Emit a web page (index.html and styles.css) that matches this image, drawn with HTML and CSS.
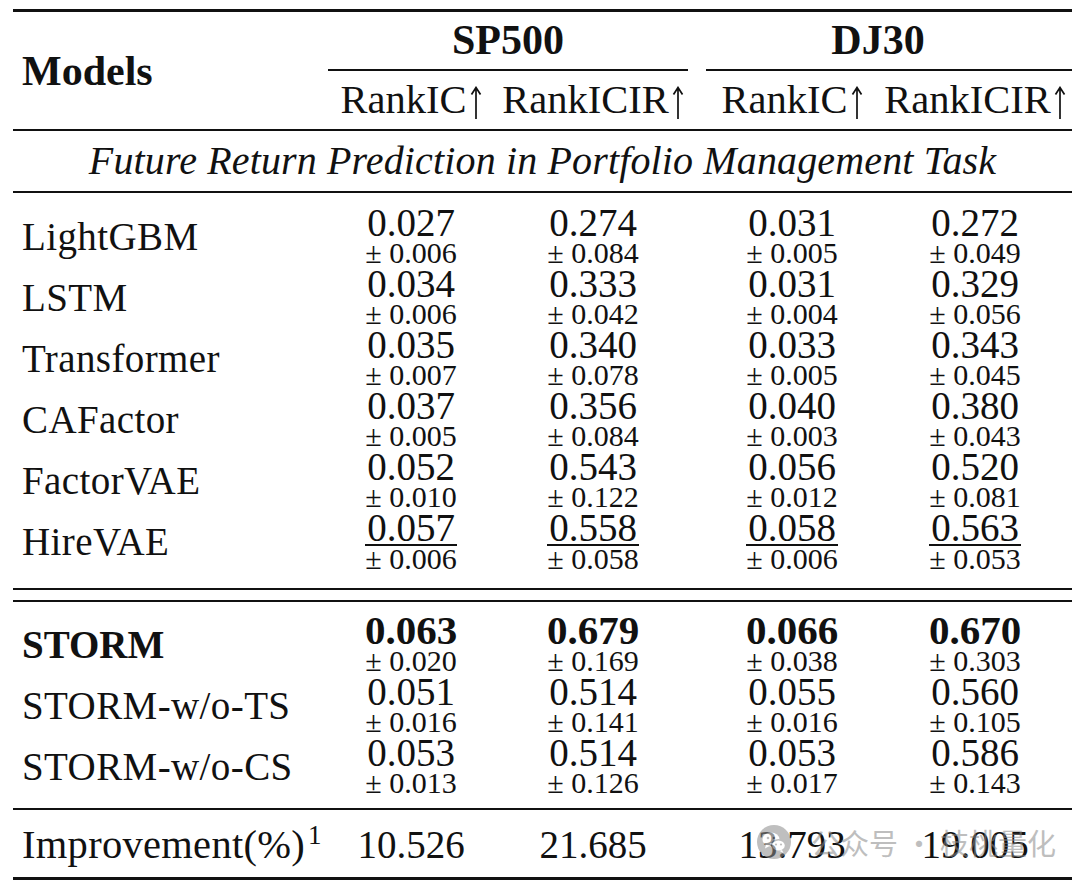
FILE: index.html
```html
<!DOCTYPE html>
<html lang="en">
<head>
<meta charset="utf-8">
<title>Results table</title>
<link rel="stylesheet" href="styles.css">
</head>
<body>
<div class="page">
  <div class="tbl">
    <div class="head">
      <div class="models">Models</div>
      <div class="grp sp"><span>SP500</span></div>
      <div class="grp dj"><span>DJ30</span></div>
      <div class="sub s1">RankIC<svg class="arr" viewBox="0 0 12 33" aria-hidden="true"><path d="M6 1.5 V33 M1.5 8.5 L6 1.5 L10.5 8.5"/></svg></div>
      <div class="sub s2">RankICIR<svg class="arr" viewBox="0 0 12 33" aria-hidden="true"><path d="M6 1.5 V33 M1.5 8.5 L6 1.5 L10.5 8.5"/></svg></div>
      <div class="sub s3">RankIC<svg class="arr" viewBox="0 0 12 33" aria-hidden="true"><path d="M6 1.5 V33 M1.5 8.5 L6 1.5 L10.5 8.5"/></svg></div>
      <div class="sub s4">RankICIR<svg class="arr" viewBox="0 0 12 33" aria-hidden="true"><path d="M6 1.5 V33 M1.5 8.5 L6 1.5 L10.5 8.5"/></svg></div>
    </div>
    <div class="task">Future Return Prediction in Portfolio Management Task</div>

    <div class="group g1">
      <div class="row">
        <div class="name">LightGBM</div>
        <div class="cell"><div class="st"><div class="mn">0.027</div><div class="sd">± 0.006</div></div></div>
        <div class="cell"><div class="st"><div class="mn">0.274</div><div class="sd">± 0.084</div></div></div>
        <div class="cell c3"><div class="st"><div class="mn">0.031</div><div class="sd">± 0.005</div></div></div>
        <div class="cell"><div class="st"><div class="mn">0.272</div><div class="sd">± 0.049</div></div></div>
      </div>
      <div class="row">
        <div class="name">LSTM</div>
        <div class="cell"><div class="st"><div class="mn">0.034</div><div class="sd">± 0.006</div></div></div>
        <div class="cell"><div class="st"><div class="mn">0.333</div><div class="sd">± 0.042</div></div></div>
        <div class="cell c3"><div class="st"><div class="mn">0.031</div><div class="sd">± 0.004</div></div></div>
        <div class="cell"><div class="st"><div class="mn">0.329</div><div class="sd">± 0.056</div></div></div>
      </div>
      <div class="row">
        <div class="name">Transformer</div>
        <div class="cell"><div class="st"><div class="mn">0.035</div><div class="sd">± 0.007</div></div></div>
        <div class="cell"><div class="st"><div class="mn">0.340</div><div class="sd">± 0.078</div></div></div>
        <div class="cell c3"><div class="st"><div class="mn">0.033</div><div class="sd">± 0.005</div></div></div>
        <div class="cell"><div class="st"><div class="mn">0.343</div><div class="sd">± 0.045</div></div></div>
      </div>
      <div class="row">
        <div class="name">CAFactor</div>
        <div class="cell"><div class="st"><div class="mn">0.037</div><div class="sd">± 0.005</div></div></div>
        <div class="cell"><div class="st"><div class="mn">0.356</div><div class="sd">± 0.084</div></div></div>
        <div class="cell c3"><div class="st"><div class="mn">0.040</div><div class="sd">± 0.003</div></div></div>
        <div class="cell"><div class="st"><div class="mn">0.380</div><div class="sd">± 0.043</div></div></div>
      </div>
      <div class="row">
        <div class="name">FactorVAE</div>
        <div class="cell"><div class="st"><div class="mn">0.052</div><div class="sd">± 0.010</div></div></div>
        <div class="cell"><div class="st"><div class="mn">0.543</div><div class="sd">± 0.122</div></div></div>
        <div class="cell c3"><div class="st"><div class="mn">0.056</div><div class="sd">± 0.012</div></div></div>
        <div class="cell"><div class="st"><div class="mn">0.520</div><div class="sd">± 0.081</div></div></div>
      </div>
      <div class="row">
        <div class="name">HireVAE</div>
        <div class="cell"><div class="st ul"><div class="mn">0.057</div><div class="sd">± 0.006</div></div></div>
        <div class="cell"><div class="st ul"><div class="mn">0.558</div><div class="sd">± 0.058</div></div></div>
        <div class="cell c3"><div class="st ul"><div class="mn">0.058</div><div class="sd">± 0.006</div></div></div>
        <div class="cell"><div class="st ul"><div class="mn">0.563</div><div class="sd">± 0.053</div></div></div>
      </div>
    </div>

    <div class="group g2">
      <div class="row b">
        <div class="name">STORM</div>
        <div class="cell"><div class="st"><div class="mn">0.063</div><div class="sd">± 0.020</div></div></div>
        <div class="cell"><div class="st"><div class="mn">0.679</div><div class="sd">± 0.169</div></div></div>
        <div class="cell c3"><div class="st"><div class="mn">0.066</div><div class="sd">± 0.038</div></div></div>
        <div class="cell"><div class="st"><div class="mn">0.670</div><div class="sd">± 0.303</div></div></div>
      </div>
      <div class="row">
        <div class="name">STORM-w/o-TS</div>
        <div class="cell"><div class="st"><div class="mn">0.051</div><div class="sd">± 0.016</div></div></div>
        <div class="cell"><div class="st"><div class="mn">0.514</div><div class="sd">± 0.141</div></div></div>
        <div class="cell c3"><div class="st"><div class="mn">0.055</div><div class="sd">± 0.016</div></div></div>
        <div class="cell"><div class="st"><div class="mn">0.560</div><div class="sd">± 0.105</div></div></div>
      </div>
      <div class="row">
        <div class="name">STORM-w/o-CS</div>
        <div class="cell"><div class="st"><div class="mn">0.053</div><div class="sd">± 0.013</div></div></div>
        <div class="cell"><div class="st"><div class="mn">0.514</div><div class="sd">± 0.126</div></div></div>
        <div class="cell c3"><div class="st"><div class="mn">0.053</div><div class="sd">± 0.017</div></div></div>
        <div class="cell"><div class="st"><div class="mn">0.586</div><div class="sd">± 0.143</div></div></div>
      </div>
    </div>

    <div class="row imp">
      <div class="name">Improvement(%)<sup>1</sup></div>
      <div class="cell v">10.526</div>
      <div class="cell v">21.685</div>
      <div class="cell v c3">13.793</div>
      <div class="cell v">19.005</div>
    </div>
  </div>

  <div class="wm">
    <svg class="wm-icon" width="34" height="34" viewBox="0 0 34 34" aria-hidden="true">
      <circle cx="17" cy="17" r="17" fill="#8c8c8c"/>
      <ellipse cx="14" cy="14.5" rx="8.5" ry="7" fill="#fff"/>
      <path d="M9 19.5 L8 23.5 L12.5 21 Z" fill="#fff"/>
      <circle cx="11" cy="13" r="1.3" fill="#8c8c8c"/>
      <circle cx="17" cy="13" r="1.3" fill="#8c8c8c"/>
      <ellipse cx="21.5" cy="20.5" rx="7" ry="5.8" fill="#fff" stroke="#8c8c8c" stroke-width="1.4"/>
      <path d="M25 25 L26.5 28 L22.5 26 Z" fill="#fff"/>
      <circle cx="19" cy="19.5" r="1.1" fill="#8c8c8c"/>
      <circle cx="24" cy="19.5" r="1.1" fill="#8c8c8c"/>
    </svg>
    <span class="wm-text">公众号 · 枝桃量化</span>
  </div>
</div>
</body>
</html>
```

FILE: styles.css
```css
body {
  margin: 0;
  background: #ffffff;
  color: #111111;
  font-family: "Liberation Serif", "Times New Roman", serif;
}

.page {
  position: relative;
  width: 1080px;
  height: 883px;
  overflow: hidden;
}

.tbl {
  margin: 9px 0 0 13px;
  width: 1059px;
  border-top: 3px solid #111;
  border-bottom: 3px solid #111;
}

.head,
.row {
  display: grid;
  grid-template-columns: 313px 170px 194px 188px 194px;
}

.head {
  grid-template-rows: 59px 58px;
  border-bottom: 2px solid #111;
}

.models {
  grid-row: 1 / 3;
  grid-column: 1;
  align-self: center;
  padding-left: 9px;
  font-weight: 700;
  font-size: 42px;
  line-height: 42px;
}

.grp {
  grid-row: 1;
  font-weight: 700;
  font-size: 42px;
}

.grp span {
  display: block;
  line-height: 57px;
  border-bottom: 2px solid #111;
  text-align: center;
}

.sp {
  grid-column: 2 / 4;
  padding: 0 2px;
}

.dj {
  grid-column: 4 / 6;
  padding-left: 16px;
}

.dj span {
  padding-right: 22px;
}

.sub {
  grid-row: 2;
  font-size: 40.5px;
  line-height: 58px;
  text-align: center;
  white-space: nowrap;
}

.arr {
  display: inline-block;
  width: 12px;
  height: 33px;
  margin-left: 3px;
  vertical-align: -6px;
  fill: none;
  stroke: #111;
  stroke-width: 1.7;
}

.s1 { grid-column: 2; }
.s2 { grid-column: 3; }
.s3 { grid-column: 4; padding-left: 16px; }
.s4 { grid-column: 5; }

.task {
  font-style: italic;
  font-size: 40px;
  letter-spacing: 0.14px;
  line-height: 60px;
  text-align: center;
  border-bottom: 2px solid #111;
  white-space: nowrap;
}

.group {
  padding: 13px 0 15px;
  border-bottom: 2px solid #111;
}

.g2 {
  margin-top: 10px;
  border-top: 2px solid #111;
  padding: 12px 0 11px;
}

.row {
  align-items: center;
}

.name {
  padding-left: 9px;
  font-size: 39px;
  letter-spacing: 0.4px;
  line-height: 40px;
  white-space: nowrap;
}

.b .name {
  font-weight: 700;
  letter-spacing: 0;
}

.cell {
  text-align: center;
}

.c3 {
  padding-left: 16px;
}

.st {
  display: inline-block;
  text-align: center;
}

.mn {
  font-size: 39px;
  line-height: 33px;
}

.b .mn {
  font-weight: 700;
  font-size: 41px;
}

.sd {
  font-size: 30px;
  line-height: 28px;
  white-space: nowrap;
}

.ul .sd {
  border-top: 2px solid #111;
  line-height: 26px;
}

.imp {
  padding-top: 3px;
}

.imp .name,
.imp .v {
  font-size: 39px;
  line-height: 64px;
}

.imp .name {
  font-size: 40.5px;
  letter-spacing: 0.3px;
}

.imp sup {
  font-size: 27px;
  line-height: 0;
  vertical-align: 14px;
  margin-left: 3px;
}

.wm {
  position: absolute;
  left: 757px;
  top: 825px;
  display: flex;
  align-items: center;
  gap: 20px;
  opacity: 0.55;
  pointer-events: none;
}

.wm-icon {
  display: block;
}

.wm-text {
  font-family: "Noto Sans CJK SC", "Noto Sans", sans-serif;
  font-size: 29px;
  line-height: 34px;
  color: #8a8a8a;
  white-space: nowrap;
}
```
